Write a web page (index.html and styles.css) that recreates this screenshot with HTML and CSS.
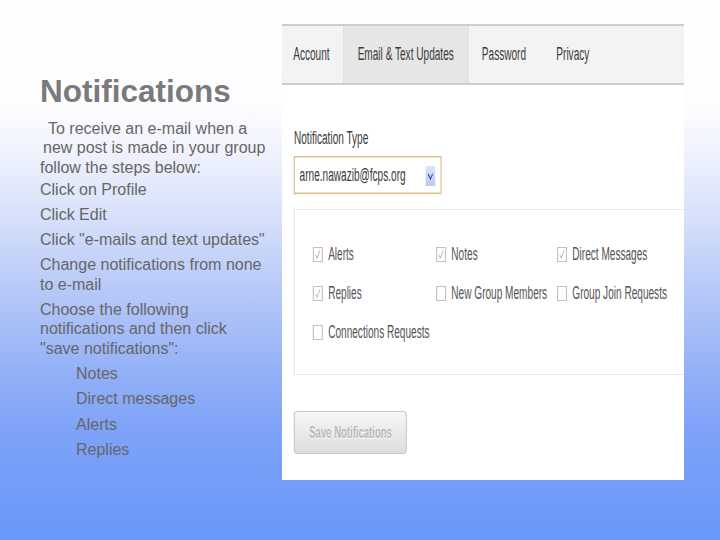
FILE: index.html
```html
<!DOCTYPE html>
<html>
<head>
<meta charset="utf-8">
<title>Notifications</title>
<link rel="stylesheet" href="styles.css">
</head>
<body>
<div class="slide">
  <div class="notes">
    <h1 class="title">Notifications</h1>
    <p class="step intro"><span class="l1">To receive an e-mail when a</span><span class="l2">new post is made in your group</span><span class="l3">follow the steps below:</span></p>
    <p class="step first">Click on Profile</p>
    <p class="step">Click Edit</p>
    <p class="step">Click &quot;e-mails and text updates&quot;</p>
    <p class="step">Change notifications from none<br>to e-mail</p>
    <p class="step">Choose the following<br>notifications and then click<br>&quot;save notifications&quot;:</p>
    <p class="step sub">Notes</p>
    <p class="step sub">Direct messages</p>
    <p class="step sub">Alerts</p>
    <p class="step sub">Replies</p>
  </div>
  <div class="shot">
    <div class="shot-inner">
      <div class="tabs">
        <div class="tab">Account</div>
        <div class="tab active">Email &amp; Text Updates</div>
        <div class="tab">Password</div>
        <div class="tab last">Privacy</div>
      </div>
      <div class="content">
        <div class="field-label">Notification Type</div>
        <div class="select">
          <span>arne.nawazib@fcps.org</span>
          <svg class="arrow" viewBox="0 0 18 20" width="18" height="20">
            <defs>
              <linearGradient id="ag" x1="0" y1="0" x2="0" y2="1">
                <stop offset="0" stop-color="#dbe5f7"/>
                <stop offset="1" stop-color="#b8cbef"/>
              </linearGradient>
            </defs>
            <rect x="0" y="0" width="18" height="20" fill="url(#ag)"/>
            <polyline points="5,8 9,13 13,8" fill="none" stroke="#3d5c9c" stroke-width="2"/>
          </svg>
        </div>
        <div class="options">
          <label class="opt"><span class="cb checked"><svg viewBox="0 0 18 15" width="18" height="15"><polyline points="5,8 8,11 13,3" fill="none" stroke="#b4b4b4" stroke-width="1.4"/></svg></span>Alerts</label>
          <label class="opt"><span class="cb checked"><svg viewBox="0 0 18 15" width="18" height="15"><polyline points="5,8 8,11 13,3" fill="none" stroke="#b4b4b4" stroke-width="1.4"/></svg></span>Notes</label>
          <label class="opt"><span class="cb checked"><svg viewBox="0 0 18 15" width="18" height="15"><polyline points="5,8 8,11 13,3" fill="none" stroke="#b4b4b4" stroke-width="1.4"/></svg></span>Direct Messages</label>
          <label class="opt"><span class="cb checked"><svg viewBox="0 0 18 15" width="18" height="15"><polyline points="5,8 8,11 13,3" fill="none" stroke="#b4b4b4" stroke-width="1.4"/></svg></span>Replies</label>
          <label class="opt"><span class="cb"></span>New Group Members</label>
          <label class="opt"><span class="cb"></span>Group Join Requests</label>
          <label class="opt"><span class="cb"></span>Connections Requests</label>
        </div>
        <button class="save">Save Notifications</button>
      </div>
    </div>
  </div>
</div>
</body>
</html>
```

FILE: styles.css
```css
html, body {
  margin: 0;
  padding: 0;
}

body {
  width: 720px;
  height: 540px;
  overflow: hidden;
  font-family: "Liberation Sans", Arial, sans-serif;
  background: linear-gradient(to bottom,
    #ffffff 0%,
    #fdfdff 20%,
    #f0f2fc 28%,
    #dee6fb 37%,
    #c8d6f9 46%,
    #b2c5f7 56%,
    #93b0f7 69%,
    #7ea2f8 80%,
    #6898fa 100%);
}

.slide {
  display: flex;
  align-items: flex-start;
  padding-top: 24px;
  height: 540px;
  box-sizing: border-box;
}

.notes {
  width: 242px;
  padding: 49px 0 0 40px;
  flex: none;
}

.title {
  margin: 0;
  font-size: 31.5px;
  line-height: 36px;
  font-weight: bold;
  color: #7a7a7a;
}

.step {
  margin: 5.7px 0 0;
  font-size: 16px;
  line-height: 19.5px;
  color: #666666;
  white-space: nowrap;
}

.intro {
  margin-top: 9.7px;
}

.intro span {
  display: block;
}

.l1 { padding-left: 8px; }
.l2 { padding-left: 3px; }

.first {
  margin-top: 2.5px;
}

.sub {
  padding-left: 36px;
}

/* screenshot panel */
.shot {
  width: 402px;
  height: 456px;
  background: #ffffff;
  overflow: hidden;
  flex: none;
}

.shot-inner {
  width: 718px;
  height: 456px;
  transform: scaleX(0.56);
  transform-origin: 0 0;
}

.tabs {
  display: flex;
  height: 57px;
  background: #f3f3f3;
  border-top: 2px solid #cdcdcd;
  border-bottom: 2px solid #cdcdcd;
}

.tab {
  display: flex;
  align-items: center;
  padding: 0 24px;
  font-size: 18px;
  color: #3a3a3a;
}

.tab:first-child {
  padding-left: 20px;
}

.tab.last {
  padding-left: 30px;
}

.tab.active {
  background: #e6e6e6;
  border-left: 2px solid #e0e0e0;
  border-right: 2px solid #e0e0e0;
}

.content {
  padding-left: 21.4px;
}

.field-label {
  margin-top: 42px;
  font-size: 18px;
  line-height: 22px;
  color: #3a3a3a;
}

.select {
  margin-top: 7px;
  width: 264px;
  height: 38px;
  box-sizing: border-box;
  display: flex;
  align-items: center;
  padding-left: 8px;
  padding-right: 9px;
  border: 1px solid #d3c08a;
  border-left-width: 2px;
  border-right-width: 2px;
  box-shadow: inset 0 1px 0 #efe4c4, inset 0 -1px 0 #efe4c4, 0 1px 1px #e8dcbc;
  font-size: 18px;
  color: #3a3a3a;
}

.arrow {
  margin-left: auto;
  margin-top: 2px;
  display: block;
}

.options {
  margin-top: 15px;
  height: 166px;
  box-sizing: border-box;
  border: 1px solid #e9e9e9;
  border-left-width: 2px;
  border-right: none;
  padding: 33px 0 0 32px;
  display: grid;
  grid-template-columns: 220px 216px 1fr;
  row-gap: 17px;
  align-content: start;
}

.opt {
  display: flex;
  align-items: center;
  gap: 9px;
  font-size: 18px;
  line-height: 22px;
  color: #555555;
  white-space: nowrap;
}

.cb {
  width: 18px;
  height: 15px;
  box-sizing: border-box;
  border: 1px solid #c2c2c2;
  border-left-width: 2px;
  border-right-width: 2px;
  background: #ffffff;
  flex: none;
  position: relative;
}

.cb svg {
  position: absolute;
  left: -2px;
  top: -1px;
}

.save {
  display: block;
  margin-top: 36px;
  width: 202px;
  height: 43px;
  padding: 0;
  box-sizing: border-box;
  border: 1px solid #c6c6c6;
  border-left-width: 2px;
  border-right-width: 2px;
  border-radius: 7px / 4px;
  background: linear-gradient(to bottom, #f7f7f7, #dddddd);
  font-family: "Liberation Sans", Arial, sans-serif;
  font-weight: bold;
  font-size: 17px;
  color: #b8b8b8;
  text-shadow: 0 1px 0 #ffffff;
}
```
